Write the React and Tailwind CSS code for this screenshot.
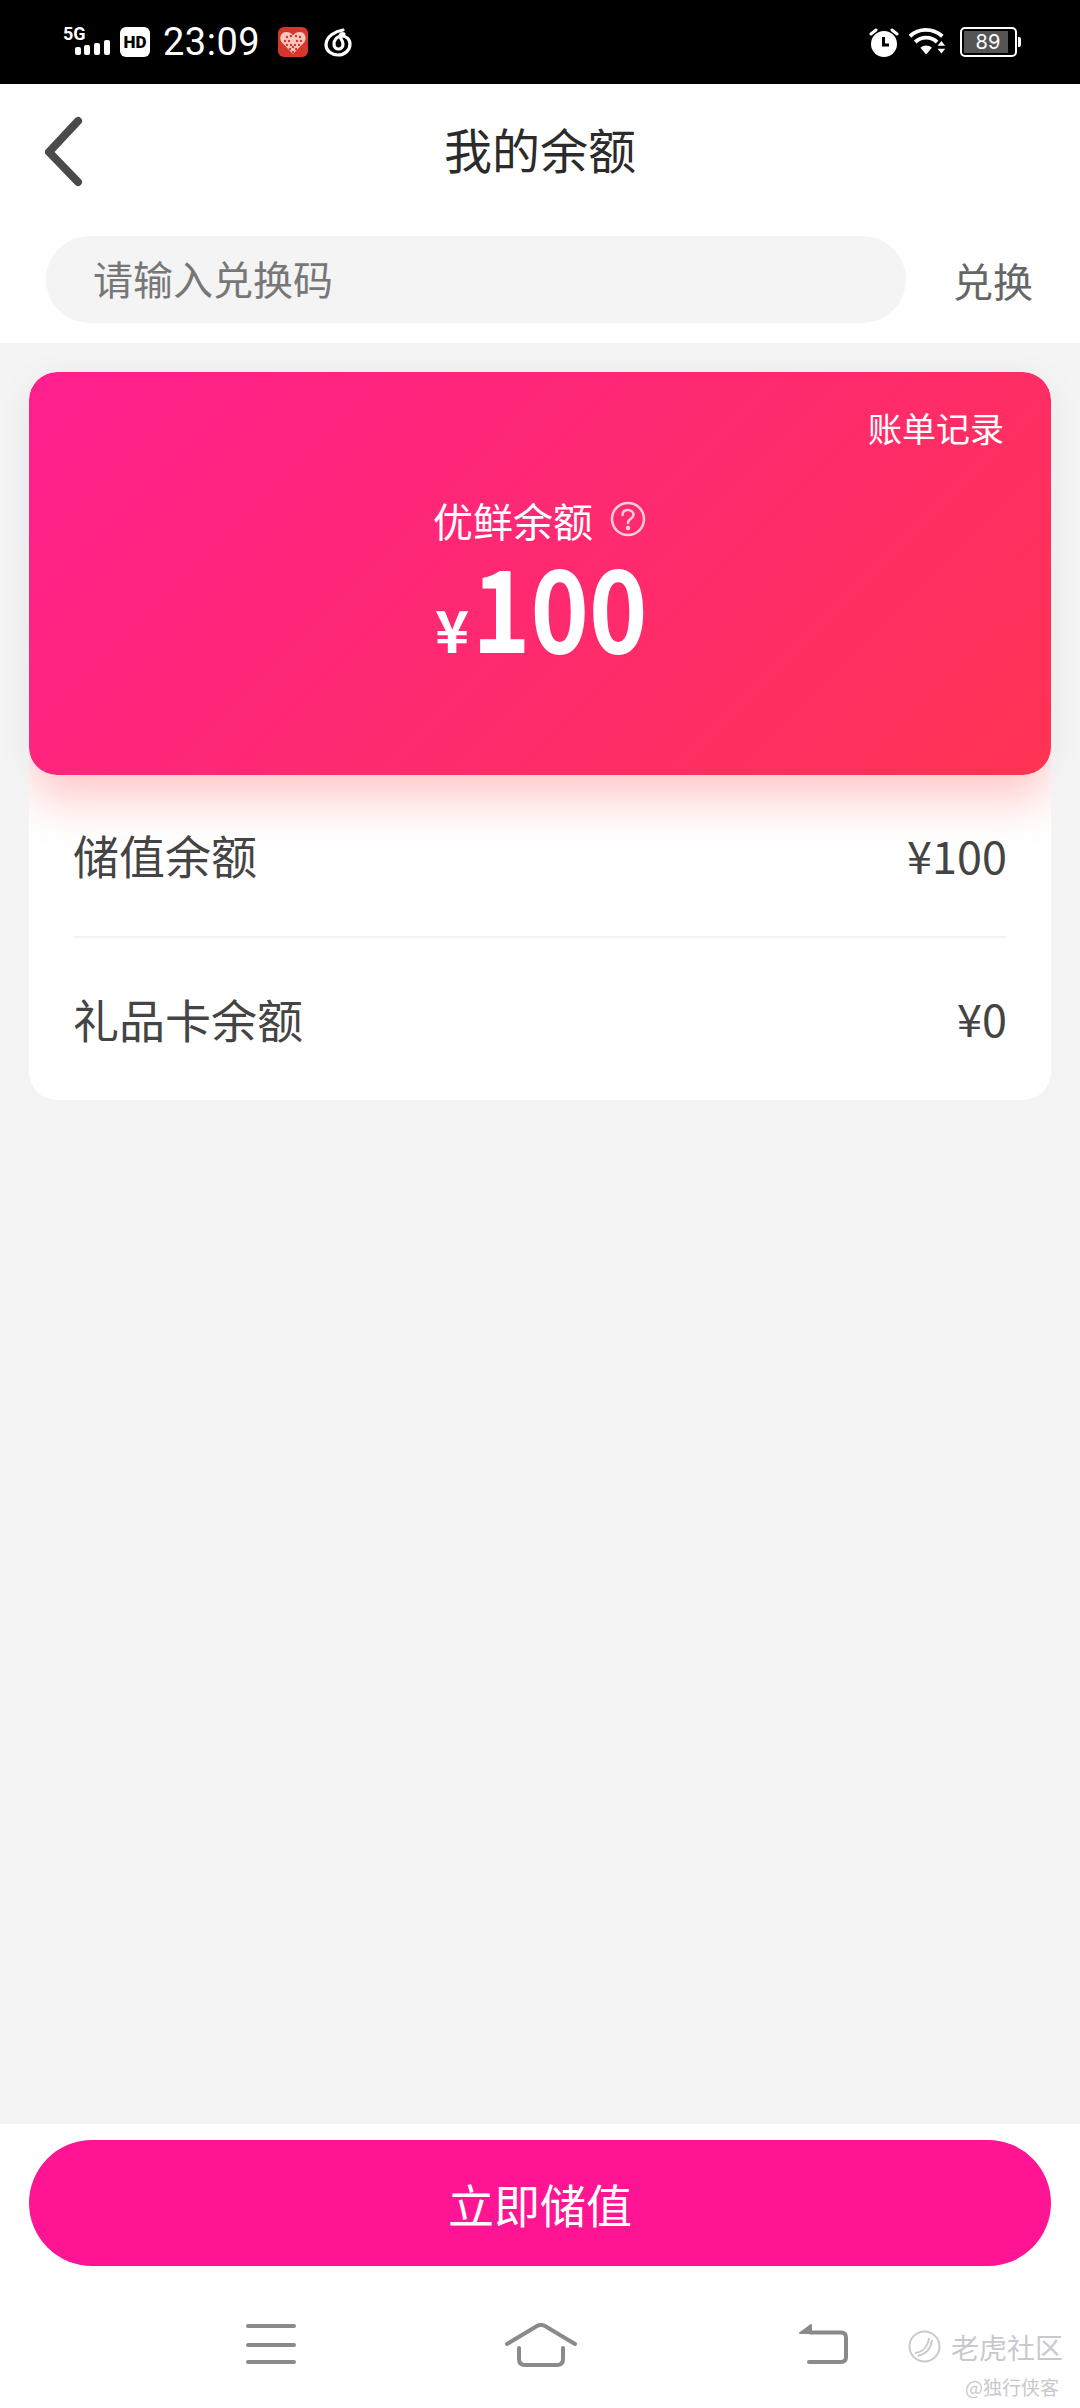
const cjk = { fontFamily: '"Noto Sans CJK SC", sans-serif' };

const heartDots = [
  [9, 10], [13, 9], [18, 9], [22, 10], [7, 14], [11, 14], [19, 14], [23, 14],
  [9, 18], [13, 18], [17, 18], [21, 18], [12, 22], [15, 20], [18, 22], [15, 25],
];

const StatusBar = () => (
  <div className="h-[84px] bg-black flex items-center justify-between pl-[62px] pr-[60px] text-white shrink-0">
    <div className="flex items-center">
      <svg width="50" height="44" viewBox="0 0 50 44">
        <text x="1" y="20" fontSize="18" fontWeight="700" fill="#fff" fontFamily="Roboto, sans-serif">5G</text>
        <rect x="13" y="27" width="6" height="8" rx="2" fill="#fff" />
        <rect x="22" y="25" width="6" height="10" rx="2" fill="#fff" />
        <rect x="32" y="23" width="6" height="12" rx="2" fill="#fff" />
        <rect x="42" y="20" width="6" height="15" rx="2" fill="#fff" />
      </svg>
      <div className="ml-[8px] w-[30px] h-[30px] rounded-[6px] bg-white flex items-center justify-center">
        <span className="text-black text-[17px] font-black leading-none" style={{ fontFamily: "Roboto, sans-serif" }}>HD</span>
      </div>
      <span className="ml-[13px] text-[38px] leading-none tracking-[0.5px]" style={{ fontFamily: "Roboto, sans-serif" }}>23:09</span>
      <svg width="30" height="30" viewBox="0 0 30 30" className="ml-[18px]">
        <rect width="30" height="30" rx="6" fill="#d6372d" />
        <path d="M15 27 L3.500 15 C0.500 10 3.500 5 8.500 5 C11.500 5 13.500 6.500 15 8.500 C16.500 6.500 18.500 5 21.500 5 C26.500 5 29.500 10 26.500 15 Z" fill="#f4c8c0" />
        {heartDots.map(([cx, cy]) => (
          <circle key={`${cx}-${cy}`} cx={cx} cy={cy} r="1.2" fill="#d6372d" />
        ))}
      </svg>
      <svg width="30" height="30" viewBox="0 0 30 30" className="ml-[16px]" fill="none" stroke="#fff" strokeWidth="3.200" strokeLinecap="round">
        <path d="M19 3 C12 4 2 9 2 18 C2 24 8 28 14 28 C21 28 26 23 26 17 C26 12 22 9 18 9 C13 9 10 13 10 17 C10 20 12 22 14.500 22 C17 22 19 20 19 17 C19 13 16 12 16 9 C16 7 18 6 20 7" />
      </svg>
    </div>
    <div className="flex items-center mr-[3px]">
      <svg width="30" height="30" viewBox="0 0 30 30">
        <circle cx="15" cy="17" r="13" fill="#fff" />
        <path d="M14.500 10 V18 H20" fill="none" stroke="#000" strokeWidth="3" />
        <path d="M2 7 L7 3 M28 7 L23 3" stroke="#fff" strokeWidth="3" strokeLinecap="round" />
      </svg>
      <svg width="40" height="30" viewBox="0 0 42 30" className="ml-[10px]">
        <path d="M1 9 C10 0 25 0 35 9" fill="none" stroke="#fff" strokeWidth="4" />
        <path d="M6.500 15 C13 9 23 9 29.500 15" fill="none" stroke="#fff" strokeWidth="4" />
        <path d="M12 21 C15.500 18 20.500 18 24 21 L18 28 Z" fill="#fff" />
        <path d="M34 14 L38 19 H30 Z M30 22 H38 L34 27 Z" fill="#fff" />
      </svg>
      <div className="ml-[11px] relative w-[57px] h-[30px] rounded-[5px] border-[2px] border-white p-[2px]">
        <div className="h-full w-[44px] bg-[#555] flex items-center justify-center pl-[4px]">
          <span className="text-[20px] leading-none" style={{ fontFamily: "Inter, sans-serif" }}>89</span>
        </div>
        <div className="absolute right-[-6px] top-[8px] w-[3px] h-[10px] bg-white rounded-r-[2px]" />
      </div>
    </div>
  </div>
);

const Row = ({ label, value }) => (
  <div className="flex-1 flex items-center justify-between text-[#444] pb-[3px]">
    <span className="text-[46px] leading-none">{label}</span>
    <span className="text-[45px] leading-none">{value}</span>
  </div>
);

export default function App() {
  return (
    <div className="w-[1080px] h-[2408px] flex flex-col bg-[#f4f4f4] overflow-hidden relative" style={cjk}>
      <StatusBar />

      <div className="bg-white h-[259px] shrink-0 flex flex-col">
        <div className="relative h-[152px] shrink-0 flex items-center justify-center">
          <svg width="44" height="72" viewBox="0 0 44 72" className="absolute left-[41px] top-[32px]" fill="none" stroke="#4a4a4a" strokeWidth="8" strokeLinecap="round" strokeLinejoin="round">
            <path d="M37 5 L8 36 L37 66" />
          </svg>
          <h1 className="text-[48px] leading-none text-[#2b2b2b] font-normal mb-[24px]">我的余额</h1>
        </div>
        <div className="flex items-center pl-[46px] pr-[47px]">
          <div className="w-[860px] h-[87px] rounded-[44px] bg-[#f4f4f4] flex items-center pl-[47px] pb-[3px]">
            <span className="text-[40px] leading-none text-[#777]">请输入兑换码</span>
          </div>
          <span className="ml-auto text-[40px] leading-none text-[#666]">兑换</span>
        </div>
      </div>

      <div className="h-[757px] shrink-0 pt-[29px] px-[29px]">
        <div className="relative h-[728px]">
          <div className="absolute inset-x-0 top-0 h-[403px] rounded-[28px] shadow-[0_6px_36px_rgba(0,0,0,0.06)]" />
          <div className="relative bg-white h-[728px] rounded-[28px] overflow-hidden flex flex-col">
            <div className="relative z-10 h-[403px] shrink-0 rounded-[28px] bg-[linear-gradient(135deg,#ff1f8e,#ff3353)] shadow-[0_24px_48px_rgba(255,70,70,0.3)] text-white flex flex-col items-center">
              <span className="self-end mr-[47px] mt-[36px] text-[34px] leading-[40px]">账单记录</span>
              <div className="flex items-center mt-[48px] ml-[-1px]">
                <span className="text-[40px] leading-[48px]">优鲜余额</span>
                <svg width="36" height="36" viewBox="0 0 36 36" className="ml-[17px] mt-[-2px]" fill="none" stroke="#ffd0dc" strokeWidth="2.500">
                  <circle cx="18" cy="18" r="16" />
                  <path d="M12.500 14 C12.500 10.500 15 9 18 9 C21 9 23.500 11 23.500 14 C23.500 18 18 17.500 18 22" strokeLinecap="round" />
                  <circle cx="18" cy="27" r="1" fill="#ffd0dc" />
                </svg>
              </div>
              <div className="self-start flex items-baseline font-bold mt-[3px] ml-[406px]">
                <span className="text-[58px] leading-none">¥</span>
                <span className="text-[114px] leading-[114px] ml-[3px] inline-block origin-left scale-x-[0.87]">100</span>
              </div>
            </div>
            <div className="flex-1 flex flex-col px-[44px]">
              <div className="flex-1 flex flex-col">
                <Row label="储值余额" value="¥100" />
              </div>
              <div className="h-[2px] bg-[#f4f4f4] shrink-0" />
              <div className="h-[162px] shrink-0 flex flex-col">
                <Row label="礼品卡余额" value="¥0" />
              </div>
            </div>
          </div>
        </div>
      </div>

      <div className="flex-1" />

      <div className="bg-white h-[284px] shrink-0 px-[29px] pt-[16px] flex flex-col">
        <div className="h-[126px] rounded-[63px] bg-[#ff1493] flex items-center justify-center shrink-0">
          <span className="text-white text-[46px] leading-none">立即储值</span>
        </div>
        <div className="flex items-start mt-[57px] pl-[217px]">
          <svg width="50" height="42" viewBox="0 0 50 42" stroke="#8a8a8a" strokeWidth="4" strokeLinecap="round">
            <path d="M2 3 H48 M2 22 H48 M2 39 H48" />
          </svg>
          <svg width="72" height="46" viewBox="0 0 72 46" className="ml-[209px]" fill="none" stroke="#8a8a8a" strokeWidth="4" strokeLinecap="round" strokeLinejoin="round">
            <path d="M2 21 L32 3 Q36 1 40 3 L70 21" />
            <path d="M14 25 V36 Q14 42 20 42 H52 Q58 42 58 36 V25" />
          </svg>
          <svg width="52" height="44" viewBox="0 0 52 44" className="ml-[221px]" fill="none" stroke="#8a8a8a" strokeWidth="4" strokeLinecap="round" strokeLinejoin="round">
            <path d="M12 9.500 H43 Q48 9.500 48 14.500 V34 Q48 39 43 39 H11" />
            <path d="M2 10 L13 2 V10 Z" fill="#8a8a8a" strokeWidth="2" />
          </svg>
        </div>
      </div>

      <div className="absolute left-[908px] top-[2330px] text-[#c9c9cd]">
        <div className="flex items-center">
          <svg width="33" height="33" viewBox="0 0 33 33" fill="none" stroke="#c9c9cd" strokeWidth="2">
            <circle cx="16.500" cy="16.500" r="15" />
            <path d="M21 8 C20 16 15 22 7 23 M24 10 C23 18 18 24 10 26" />
          </svg>
          <span className="ml-[10px] text-[28px] leading-none">老虎社区</span>
        </div>
        <div className="text-[19px] leading-none mt-[14px] ml-[57px] whitespace-nowrap">@独行侠客</div>
      </div>
    </div>
  );
}
